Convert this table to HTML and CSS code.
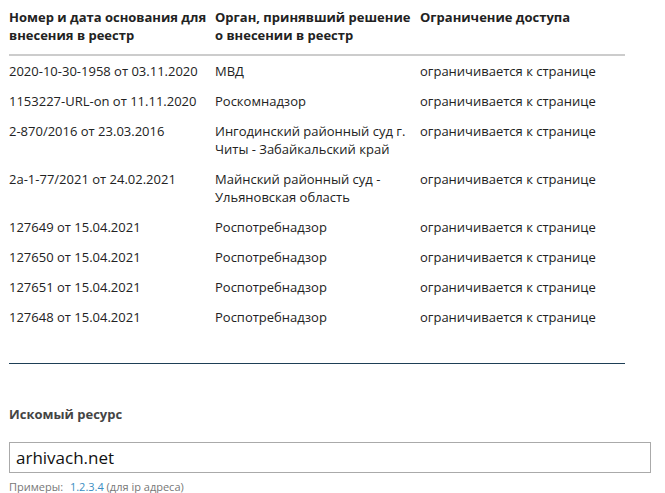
FILE: index.html
```html
<!DOCTYPE html>
<html lang="ru">
<head>
<meta charset="utf-8">
<link rel="stylesheet" href="styles.css">
</head>
<body>
<div class="page">
  <table class="registry">
    <thead>
      <tr>
        <th class="c1">Номер и дата основания для внесения в реестр</th>
        <th class="c2">Орган, принявший решение о внесении в реестр</th>
        <th class="c3">Ограничение доступа</th>
      </tr>
    </thead>
    <tbody>
      <tr><td>2020-10-30-1958 от 03.11.2020</td><td>МВД</td><td>ограничивается к странице</td></tr>
      <tr><td>1153227-URL-on от 11.11.2020</td><td>Роскомнадзор</td><td>ограничивается к странице</td></tr>
      <tr><td>2-870/2016 от 23.03.2016</td><td>Ингодинский районный суд г. Читы - Забайкальский край</td><td>ограничивается к странице</td></tr>
      <tr><td>2а-1-77/2021 от 24.02.2021</td><td>Майнский районный суд - Ульяновская область</td><td>ограничивается к странице</td></tr>
      <tr><td>127649 от 15.04.2021</td><td>Роспотребнадзор</td><td>ограничивается к странице</td></tr>
      <tr><td>127650 от 15.04.2021</td><td>Роспотребнадзор</td><td>ограничивается к странице</td></tr>
      <tr><td>127651 от 15.04.2021</td><td>Роспотребнадзор</td><td>ограничивается к странице</td></tr>
      <tr><td>127648 от 15.04.2021</td><td>Роспотребнадзор</td><td>ограничивается к странице</td></tr>
    </tbody>
  </table>
  <hr class="divider">
  <div class="search">
    <label class="search-label" for="res">Искомый ресурс</label>
    <input id="res" class="search-input" type="text" value="arhivach.net">
    <div class="hint">Примеры: <a class="hint-link" href="#">1.2.3.4</a> (для ip адреса)</div>
  </div>
</div>
</body>
</html>
```
FILE: styles.css
```css
html, body {
  margin: 0;
  padding: 0;
  background: #fff;
}
body {
  font-family: "Open Sans", "Noto Sans", sans-serif;
  font-size: 13px;
  color: #222;
}
.page {
  padding: 0 0 0 9px;
}
.registry {
  width: 616px;
  border-collapse: collapse;
  table-layout: fixed;
}
.registry th,
.registry td {
  text-align: left;
  vertical-align: top;
  line-height: 18px;
  padding: 6px 6px 6px 0;
}
.registry th {
  font-weight: 700;
  padding-top: 8px;
  padding-bottom: 10px;
  border-bottom: 2px solid #cccccc;
}
.registry .c1 { width: 200px; }
.registry .c2 { width: 199px; }
.divider {
  width: 616px;
  margin: 31px 0 0 0;
  border: 0;
  border-top: 1px solid #1e3f56;
  height: 0;
}
.search {
  padding-top: 41px;
  display: flex;
  flex-direction: column;
  align-items: flex-start;
}
.search-label {
  font-weight: 700;
  color: #444;
  line-height: 18px;
}
.search-input {
  margin-top: 19px;
  width: 642px;
  height: 31px;
  box-sizing: border-box;
  border: 1px solid #aaaaaa;
  border-radius: 0;
  padding: 0 6px;
  font-family: "Open Sans", "Noto Sans", sans-serif;
  font-size: 17px;
  color: #111;
  outline: none;
}
.hint {
  margin-top: 6px;
  font-size: 11px;
  line-height: 16px;
  color: #777;
}
.hint-link {
  color: #3b8ec2;
  text-decoration: none;
  margin-left: 4px;
}
```
